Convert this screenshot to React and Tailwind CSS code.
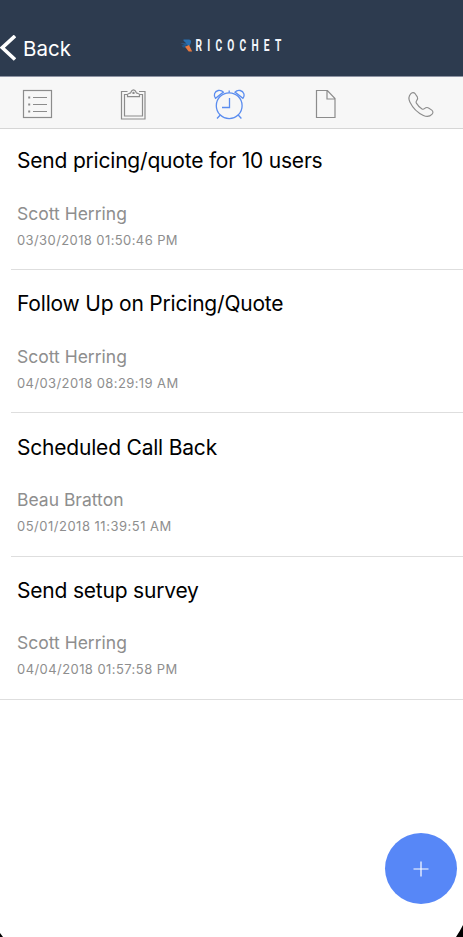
const tasks = [
  { title: 'Send pricing/quote for 10 users', name: 'Scott Herring', date: '03/30/2018 01:50:46 PM', dateClass: 'tracking-[0.400px]' },
  { title: 'Follow Up on Pricing/Quote', name: 'Scott Herring', date: '04/03/2018 08:29:19 AM', dateClass: 'tracking-[0.400px]' },
  { title: 'Scheduled Call Back', name: 'Beau Bratton', date: '05/01/2018 11:39:51 AM', dateClass: 'tracking-[0.500px]' },
  { title: 'Send setup survey', name: 'Scott Herring', date: '04/04/2018 01:57:58 PM', dateClass: 'tracking-[0.430px]' },
];

const iconProps = {
  viewBox: '0 0 32 32',
  fill: 'none',
  stroke: 'currentColor',
  strokeWidth: 1.2,
  className: 'size-8',
};

function ListIcon() {
  return (
    <svg {...iconProps}>
      <rect x="2.500" y="2.500" width="28" height="27" />
      <path d="M12 9.500h14M12 16.500h14M12 23.500h14" />
      <path d="M7.200 9.500h2M7.200 16.500h2M7.200 23.500h2" strokeWidth="2" />
    </svg>
  );
}

function ClipboardIcon() {
  return (
    <svg {...iconProps}>
      <path d="M10.500 3.500H4.500v27.500h23.500v-27.500h-6" />
      <path d="M10.500 6.500H7.500v21.500h18V6.500h-3" />
      <path d="M10.500 8.700V6.800c0-1.400 2-1 3.200-2 .5-.5.4-2.900 2.800-2.900s2.300 2.400 2.800 2.900c1.200 1 3.200.6 3.200 2v1.900z" />
      <circle cx="16.500" cy="4.900" r=".6" />
    </svg>
  );
}

function AlarmIcon() {
  return (
    <svg {...iconProps} strokeWidth={1.3}>
      <circle cx="16.200" cy="17.700" r="12.900" />
      <path d="M16.500 10v9.500H9M16.200 2.500v2.300M7.300 27l-3.300 3.500M25.200 27l3.200 3.500" />
      <path d="M2.500 10.300C.2 7.400 1.500 3.300 5.200 2.500c2-.4 4 .3 5.200 1.600z" />
      <path d="M29.900 10.300c2.300-2.900 1-7-2.700-7.800-2-.4-4 .3-5.200 1.600z" />
    </svg>
  );
}

function FileIcon() {
  return (
    <svg {...iconProps}>
      <path d="M7.500 2.500h10.900l7.600 8v19H7.500zM18 2.500v8.500h8" />
    </svg>
  );
}

function PhoneIcon() {
  return (
    <svg {...iconProps}>
      <g transform="translate(1.400 1.700) scale(.94)">
        <path d="M4.500 4.500C6 2.700 8 2.800 9.300 4.300l2.300 3.300c.8 1.500.5 2.700-.8 4.200-.8.900-.8 1.500-.2 2.500 1.500 2.500 3.600 4.700 6 6.200 1 .6 1.700.5 2.600-.3 1.500-1.300 2.900-1.600 4.400-.8l3.400 2.300c1.600 1.300 1.600 3 .1 4.600-2.400 2.500-5.400 2.700-9 1.100C11.700 24.500 6.700 19.300 3.700 13.100 2.100 9.700 2.500 6.800 4.500 4.500z" />
      </g>
    </svg>
  );
}

function Logo() {
  return (
    <svg className="h-5 w-[108px]" viewBox="0 0 108 20">
      <path d="M3.500 4.500h5.200c2 0 2.900 1.500 2.200 3.300L9.600 11 .5 8.500h6L3.500 5.800z" fill="#286faf" />
      <path d="M1.500 10.500l6-1.500-2 3.500H3z" fill="#225788" />
      <path d="M5 11.700l4-1.800 3.200 6.600H8.700z" fill="#e8793f" />
      <g transform="translate(15.500 16) scale(.6 1)">
        <text x="0" y="0" fill="#f2f5fa" fontSize="17" fontWeight="700" letterSpacing="8.700" fontFamily="Roboto, sans-serif">RICOCHET</text>
      </g>
    </svg>
  );
}

export default function App() {
  return (
    <div className="relative flex h-[937px] w-full flex-col overflow-hidden bg-white font-[Inter,sans-serif]">
      <header className="grid h-[76px] shrink-0 grid-cols-[180px_108px_1fr] bg-[#2d3b4f] pt-[35px]">
        <div className="flex h-7 items-center text-white">
          <svg className="h-7 w-4 shrink-0" viewBox="0 0 16 28" fill="none" stroke="currentColor" strokeWidth="3.600">
            <path d="M15 1L2.300 12.700L15 24.500" />
          </svg>
          <span className="pl-[7px] text-[20.500px] leading-7">Back</span>
        </div>
        <Logo />
      </header>

      <nav className="flex h-[53px] shrink-0 items-center justify-between border-t border-b border-t-[#8d93a3] border-b-[#d6d6d6] bg-[#f7f7f7] pr-[26px] pl-[21px] pt-0.5 text-[#8c8c8c]">
        <ListIcon />
        <ClipboardIcon />
        <span className="text-[#5b8def]"><AlarmIcon /></span>
        <FileIcon />
        <PhoneIcon />
      </nav>

      <main>
        {tasks.map((task) => (
          <article key={task.title} className="group h-[143.300px] first:h-[141px]">
            <div className="ml-[11px] h-full border-b border-[#dedede] pt-[20.300px] pl-[6px] group-first:pt-[18px] group-last:ml-0 group-last:pl-[17px]">
              <h2 className="text-[21px] leading-7 tracking-[-0.200px] text-black">{task.title}</h2>
              <p className="mt-[26.500px] text-[17.500px] leading-6 text-[#8e8e8e]">{task.name}</p>
              <p className={`mt-1 text-[13px] leading-5 text-[#8e8e8e] ${task.dateClass}`}>{task.date}</p>
            </div>
          </article>
        ))}
      </main>

      <button className="absolute top-[833px] left-[385px] flex h-[71px] w-[72px] items-center justify-center rounded-[50%] bg-[#5787f7] text-white">
        <svg className="size-4" viewBox="0 0 16 16" stroke="currentColor" strokeWidth="1.200">
          <path d="M8 .5v15M.5 8h15" />
        </svg>
      </button>
      <svg className="absolute right-0 bottom-0 h-3 w-3" viewBox="0 0 12 12">
        <path d="M12 0v12H5Q9 6 12 0z" />
      </svg>
      <svg className="absolute bottom-0 left-0 h-1 w-1" viewBox="0 0 4 4">
        <path d="M0 0v4h3z" />
      </svg>
    </div>
  );
}
